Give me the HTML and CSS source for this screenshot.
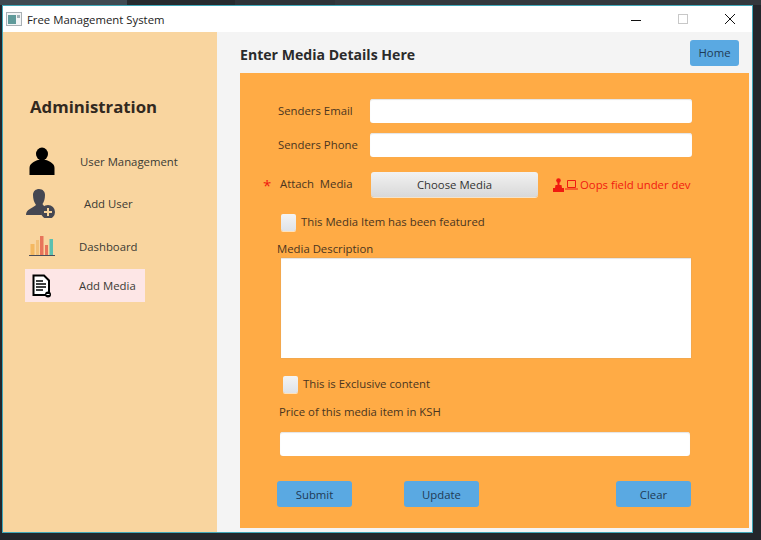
FILE: index.html
```html
<!DOCTYPE html>
<html lang="en">
<head>
<meta charset="utf-8">
<title>Free Management System</title>
<link rel="stylesheet" href="styles.css">
</head>
<body>
<div class="desktop-tabs">
  <span class="tab tab-a"></span><span class="tab tab-b"></span><span class="tab tab-c"></span>
</div>
<div class="window">
  <header class="titlebar">
    <svg class="app-icon" width="16" height="14" viewBox="0 0 16 14"><rect x="0.5" y="0.5" width="15" height="13" fill="#f2f4f5" stroke="#a8b0b4"/><rect x="2" y="3" width="8" height="9" fill="#5f9a9a"/><rect x="11" y="3" width="3" height="3" fill="#9fb0b5"/></svg>
    <span class="title">Free Management System</span>
    <div class="win-controls">
      <svg width="12" height="12" viewBox="0 0 12 12"><path d="M1 7.5H11" stroke="#111" fill="none"/></svg>
      <svg width="12" height="12" viewBox="0 0 12 12"><rect x="1.5" y="1.5" width="9" height="9" stroke="#c8c8c8" fill="none"/></svg>
      <svg width="12" height="12" viewBox="0 0 12 12"><path d="M1 1L11 11M11 1L1 11" stroke="#111" fill="none"/></svg>
    </div>
  </header>
  <div class="body-row">
    <aside class="sidebar">
      <h2 class="side-title">Administration</h2>
      <nav class="nav">
        <a class="nav-item item-users">
          <svg class="nav-icon" width="30" height="30" viewBox="0 0 30 30"><ellipse cx="15" cy="8" rx="6" ry="6.500" fill="#000"/><path d="M2.500 29V22C2.500 17.500 7 15.500 11 14H19C23 15.500 27.500 17.500 27.500 22V29Z" fill="#000"/></svg>
          <span>User Management</span>
        </a>
        <a class="nav-item item-add">
          <svg class="nav-icon" width="32" height="30" viewBox="0 0 32 30"><path d="M1 27C1 21 8 20 11 17C9 14 8 11 8 7C8 3 11 1 14 1C18 1 20 4 20 7C20 11 19 14 17.500 16C18 17 19 18 20 18.500C17 21 16 24 17 27Z" fill="#454752"/><circle cx="23" cy="24" r="7" fill="#454752"/><path d="M23 20V28M19 24H27" stroke="#f9d59c" stroke-width="2"/></svg>
          <span>Add User</span>
        </a>
        <a class="nav-item item-dash">
          <svg class="nav-icon" width="26" height="22" viewBox="0 0 26 22"><rect x="1.500" y="9" width="4" height="11" fill="#f4b860"/><rect x="7" y="5" width="3" height="15" fill="#f2c078"/><rect x="11" y="1" width="3.500" height="19" fill="#e8745a"/><rect x="16" y="10" width="3" height="10" fill="#e8745a"/><rect x="20.500" y="4" width="3.500" height="16" fill="#5cc0b0"/><path d="M0 20.500H26" stroke="#4a4c58"/></svg>
          <span>Dashboard</span>
        </a>
        <a class="nav-item item-media">
          <svg class="nav-icon" width="20" height="24" viewBox="0 0 20 24"><path d="M1.500 1.500H12L17 6.500V21H1.500Z" fill="#fff" stroke="#000" stroke-width="2"/><path d="M4 7H11M4 10H14M4 13H14M4 16H11" stroke="#000" stroke-width="1.500"/><circle cx="16" cy="20.500" r="3" fill="#000"/><path d="M14.500 20.500H17.500" stroke="#fff"/></svg>
          <span>Add Media</span>
        </a>
      </nav>
    </aside>
    <main class="content">
      <div class="content-head">
        <h1 class="page-title">Enter Media Details Here</h1>
        <button class="btn btn-home">Home</button>
      </div>
      <form class="panel">
        <div class="row row-email"><label class="field-label">Senders Email</label><span class="input input-short"></span></div>
        <div class="row row-phone"><label class="field-label">Senders Phone</label><span class="input input-short"></span></div>
        <div class="row row-attach">
          <span class="star">*</span>
          <label class="attach-label">Attach&nbsp; Media</label>
          <button type="button" class="choose">Choose Media</button>
          <span class="error">
            <svg width="11" height="14" viewBox="0 0 11 14"><circle cx="5.500" cy="2.500" r="2.300" fill="#f01a10"/><path d="M4.500 4H6.500V7H4.500Z" fill="#f01a10"/><path d="M2.500 7H8.500L9 10H11V14H0V10H2Z" fill="#f01a10"/></svg>
            <svg class="laptop" width="13" height="11" viewBox="0 0 13 11"><path d="M2.500 1.500H10.500V8.500H2.500ZM0 10H13" stroke="#f01a10" fill="none"/></svg>
            <span class="error-text">Oops field under dev</span>
          </span>
        </div>
        <div class="row row-check1"><span class="check"></span><span class="check-label">This Media Item has been featured</span></div>
        <label class="plain-label label-desc">Media Description</label>
        <div class="textarea"></div>
        <div class="row row-check2"><span class="check"></span><span class="check-label">This is Exclusive content</span></div>
        <label class="plain-label label-price">Price of this media item in KSH</label>
        <span class="input input-price"></span>
        <div class="actions">
          <button type="button" class="btn btn-action">Submit</button>
          <button type="button" class="btn btn-action btn-update">Update</button>
          <button type="button" class="btn btn-action btn-clear">Clear</button>
        </div>
      </form>
    </main>
  </div>
</div>
</body>
</html>
```
FILE: styles.css
```css
* { box-sizing: border-box; }
html, body { margin: 0; padding: 0; }
body {
  width: 761px;
  height: 540px;
  overflow: hidden;
  background: #23262b;
  font-family: "Open Sans", "Noto Sans", sans-serif;
  font-size: 11.350px;
  color: #4a3520;
}
.desktop-tabs { display: flex; height: 5px; background: #33383d; }
.tab { display: block; height: 5px; }
.tab-a { width: 127px; background: #3f4a52; }
.tab-b { width: 108px; background: #262a2e; }
.tab-c { width: 100px; background: #2e3338; }
.window {
  margin-left: 2px;
  width: 751px;
  height: 528px;
  border: 1px solid #3fa7b8;
  display: flex;
  flex-direction: column;
  background: #fff;
}
.titlebar {
  height: 26px;
  flex: none;
  display: flex;
  align-items: center;
  background: #fff;
  padding-left: 3px;
}
.app-icon { flex: none; margin-right: 5px; }
.title { color: #222; }
.win-controls { margin-left: auto; display: flex; gap: 35px; padding-right: 16px; }
.win-controls svg { display: block; }
.body-row { flex: 1; display: flex; min-height: 0; }
.sidebar { width: 214px; flex: none; background: #f9d59f; padding: 62px 0 0 22px; }
.side-title { margin: 0 0 0 5px; font-size: 16.800px; line-height: 25px; font-weight: 700; color: #32291f; }
.nav { display: flex; flex-direction: column; margin-top: 26px; }
.nav-item { display: flex; align-items: center; color: #3a3a34; }
.item-users { height: 32px; padding-left: 2px; }
.item-users span { margin-left: 23px; }
.item-add { height: 32px; margin-top: 10px; }
.item-add span { margin-left: 27px; }
.item-dash { height: 26px; margin-top: 14px; padding-left: 4px; }
.item-dash span { margin-left: 24px; }
.item-media { width: 120px; height: 33px; margin-top: 10px; background: #fde6e6; padding-left: 7px; }
.item-media span { margin-left: 27px; }
.content { flex: 1; background: #f4f4f4; padding: 0 3px 4px 23px; display: flex; flex-direction: column; min-width: 0; }
.content-head { height: 41px; flex: none; display: flex; align-items: center; justify-content: space-between; padding-right: 10px; }
.page-title { margin: 4px 0 0; font-size: 14.100px; font-weight: 700; color: #2b2b2b; }
.btn {
  border: 0;
  border-radius: 3px;
  background: #5aa9e2;
  color: #1f3a55;
  font-family: inherit;
  font-size: 11.350px;
  padding: 0;
}
.btn-home { width: 49px; height: 26px; }
.panel { flex: 1; background: #ffab45; padding-top: 26px; display: flex; flex-direction: column; }
.row { display: flex; align-items: center; }
.field-label { width: 92px; margin-left: 38px; padding-bottom: 2px; }
.input { display: block; height: 24px; background: #fff; border-radius: 3px; box-shadow: inset 0 1px 1px #e4e4e4, 0 0 1px #d9a870; }
.input-short { width: 322px; }
.row-phone { margin-top: 10px; }
.row-attach { margin-top: 15px; height: 25px; }
.star { width: 17px; margin-left: 23px; color: #f01a10; font-size: 15px; line-height: 14px; }
.attach-label { width: 91px; padding-bottom: 2px; }
.choose {
  width: 167px;
  height: 25px;
  border: 0;
  border-radius: 3px;
  background: linear-gradient(#f2f2f2, #d8d8d8);
  box-shadow: 0 1px 0 #f6e3c8;
  color: #333;
  font-family: inherit;
  font-size: 11.350px;
  padding: 0;
}
.error { display: flex; align-items: center; margin-left: 15px; color: #f01a10; }
.error svg { display: block; flex: none; }
.laptop { margin-left: 1px; }
.error-text { margin-left: 2px; padding-bottom: 1px; }
.row-check1 { margin-top: 17px; margin-left: 41px; height: 17px; }
.row-check2 { margin-top: 18px; margin-left: 43px; height: 17px; }
.check-label { padding-bottom: 2px; }
.check { display: block; width: 15px; height: 17px; border-radius: 2px; background: linear-gradient(#f4f4f4, #dfe3e8); box-shadow: 0 1px 0 #ffe2bb; margin-right: 5px; }
.plain-label { display: block; line-height: 16px; }
.label-desc { margin: 10px 0 0 37px; height: 17px; }
.textarea { width: 410px; height: 100px; margin-left: 41px; background: #fff; box-shadow: inset 0 1px 1px #e4e4e4, 0 0 1px #b89a78; }
.label-price { margin: 11px 0 0 39px; }
.input-price { width: 410px; margin: 12px 0 0 40px; }
.actions { display: flex; margin: 25px 0 0 37px; width: 414px; }
.btn-action { width: 75px; height: 26px; }
.btn-update { margin-left: 52px; }
.btn-clear { margin-left: auto; }
```
